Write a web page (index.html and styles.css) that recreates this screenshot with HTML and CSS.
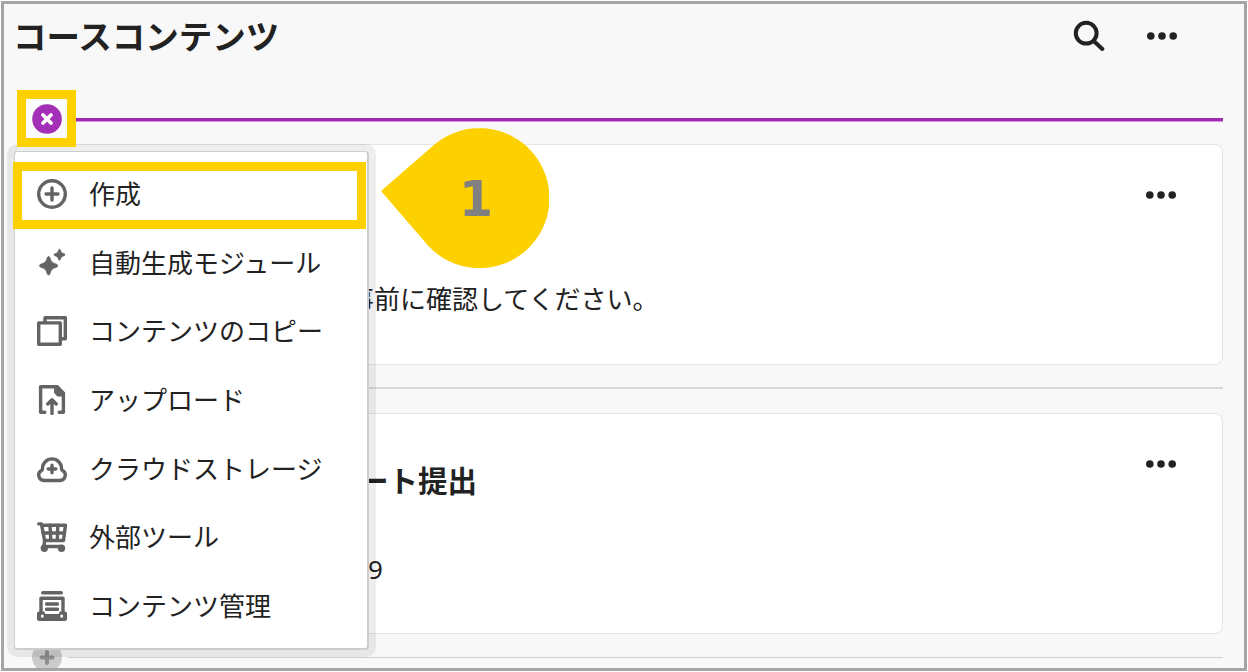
FILE: index.html
```html
<!DOCTYPE html>
<html lang="ja">
<head>
  <meta charset="UTF-8">
  <title>コースコンテンツ</title>
  <link rel="stylesheet" href="styles.css">
</head>
<body>
  <div class="frame">
    <header class="header">
      <h1>コースコンテンツ</h1>
      <svg class="search" width="32" height="32" viewBox="0 0 32 32">
        <circle cx="13.2" cy="13.2" r="10.4"/>
        <path d="M21 21.2L29.3 29"/>
      </svg>
      <svg class="dots" width="32" height="10" viewBox="0 0 32 10">
        <circle cx="4.8" cy="5" r="3.8"/><circle cx="16" cy="5" r="3.8"/><circle cx="27.2" cy="5" r="3.8"/>
      </svg>
    </header>

    <div class="line active"></div>

    <section class="card">
      <svg class="dots" width="32" height="10" viewBox="0 0 32 10">
        <circle cx="4.8" cy="5" r="3.8"/><circle cx="16" cy="5" r="3.8"/><circle cx="27.2" cy="5" r="3.8"/>
      </svg>
      <p class="desc">事前に確認してください。</p>
    </section>

    <div class="line"></div>

    <section class="card second">
      <svg class="dots" width="32" height="10" viewBox="0 0 32 10">
        <circle cx="4.8" cy="5" r="3.8"/><circle cx="16" cy="5" r="3.8"/><circle cx="27.2" cy="5" r="3.8"/>
      </svg>
      <h2>ート提出</h2>
      <p class="due">9</p>
    </section>

    <div class="add-row">
      <svg width="30" height="30" viewBox="0 0 30 30">
        <circle cx="15" cy="15" r="15" fill="#cbcbcb"/>
        <path d="M15 10v11M9.5 15.5h11" stroke="#8c8c8c" stroke-width="4" stroke-linecap="round"/>
      </svg>
      <div class="line"></div>
    </div>
  </div>

  <ul class="menu">
    <li>
      <svg class="icon" viewBox="0 0 30 30">
        <circle cx="15" cy="15" r="13.3"/>
        <path d="M15 9v12M9 15h12"/>
      </svg>
      作成
    </li>
    <li>
      <svg class="icon solid" viewBox="0 0 30 30">
        <path d="M11.600 8.500c.8 0 1.300.8 1.600 1.700 1 3.400 2.200 4.500 5.500 5.600 1.200.4 2 .9 2 1.900s-.8 1.500-2 1.900c-3.300 1.100-4.500 2.200-5.500 5.600-.3 1.100-.8 1.900-1.600 1.900s-1.300-.8-1.600-1.900c-1-3.400-2.200-4.500-5.500-5.600-1.200-.4-2-.9-2-1.900s.8-1.500 2-1.900c3.300-1.100 4.500-2.200 5.500-5.600.3-.9.8-1.700 1.600-1.700z"/>
        <path d="M22.500 1.300c.6 0 .9.5 1.100 1.100.6 1.900 1.200 2.500 3.100 3.100.7.200 1.300.6 1.300 1.200s-.6 1-1.300 1.200c-1.900.6-2.500 1.200-3.100 3.100-.2.700-.5 1.200-1.100 1.200s-.9-.5-1.100-1.200c-.6-1.900-1.200-2.500-3.100-3.100-.7-.2-1.300-.6-1.300-1.200s.6-1 1.300-1.200c1.900-.6 2.500-1.200 3.100-3.100.2-.6.5-1.100 1.100-1.100z"/>
      </svg>
      自動生成モジュール
    </li>
    <li>
      <svg class="icon" viewBox="0 0 30 30">
        <path d="M1.700 6.900h21.600v21.400H1.700z"/>
        <path d="M8 6.500V1.700h20.300v21H24"/>
      </svg>
      コンテンツのコピー
    </li>
    <li>
      <svg class="icon" viewBox="0 0 30 30">
        <path d="M7.800 27.300H3.600V1.700h16l6.800 7v18.600h-4.200"/>
        <path class="fill" d="M18.800 1.700h1.400l6.200 6.500v1.500h-5.200l-2.400-2.500z"/>
        <path d="M15 28.500V15.500M10.800 19l4.200-4.200 4.200 4.200"/>
      </svg>
      アップロード
    </li>
    <li>
      <svg class="icon" viewBox="0 0 30 30">
        <path d="M7 26.500h16a5.400 5.400 0 0 0 2.500-10.100c-.8-.4-1-1-1-2a9.500 9.500 0 0 0-19 0c0 1-.2 1.600-1 2A5.400 5.400 0 0 0 7 26.500z"/>
        <path d="M15 11.200v7.600M11.200 15h7.600"/>
      </svg>
      クラウドストレージ
    </li>
    <li>
      <svg class="icon" viewBox="0 0 30 30">
        <path d="M1.700 1.900h2.700l3.200 16.600h18.900L28.400 3.300H4.700"/>
        <path d="M6 11h21.500M13 3.300l.8 15M20.800 3.300l-.5 15"/>
        <path d="M7.600 18.500L7 24.500h18"/>
        <circle class="fill" cx="7.300" cy="26.300" r="2"/><circle class="fill" cx="24.500" cy="26.300" r="2"/>
      </svg>
      外部ツール
    </li>
    <li>
      <svg class="icon" viewBox="0 0 30 30">
        <path d="M5.700 1.800h18.600"/>
        <path d="M4 20.500V7.300h22v13.200"/>
        <path d="M9.500 13h11M9.500 18.200h11"/>
        <path class="block" fill-rule="evenodd" d="M2 20.500h5l1.500 2.500h13l1.500-2.500h5a2 2 0 0 1 2 2V28a2 2 0 0 1-2 2H2a2 2 0 0 1-2-2v-5.500a2 2 0 0 1 2-2zM4 23.800v2.600h2.600v-2.600zM23.400 23.800v2.600H26v-2.600z"/>
      </svg>
      コンテンツ管理
    </li>
  </ul>

  <div class="mark mark-close">
    <svg width="30" height="30" viewBox="0 0 30 30">
      <circle cx="15" cy="15" r="14.800" fill="#a22fb6"/>
      <path d="M11 11l8 8M19 11l-8 8" stroke="#fff" stroke-width="3.800" stroke-linecap="round"/>
    </svg>
  </div>
  <div class="mark mark-create"></div>

  <div class="balloon">
    <svg width="168" height="140" viewBox="0 0 168 140">
      <path d="M0 63L53.500 16.500A70 70 0 1 1 46.500 117z" fill="#fdd000"/>
    </svg>
    <span>1</span>
  </div>
</body>
</html>
```

FILE: styles.css
```css
* { box-sizing: border-box; }

body {
  margin: 0;
  padding: 1px;
  width: 1248px;
  height: 672px;
  overflow: hidden;
  position: relative;
  background: #fff;
  color: #222;
  font-family: "Noto Sans", "Noto Sans CJK JP", sans-serif;
}

h1, h2, p, ul {
  margin: 0;
  padding: 0;
}

svg {
  display: block;
  flex: none;
}

.frame {
  width: 1246px;
  height: 670px;
  padding: 0 21px 0 11px;
  overflow: hidden;
  background: #f8f8f8;
  border: 3px solid #a5a5a5;
}

.header {
  display: flex;
  align-items: center;
  height: 114px;
  padding: 0 45px 50px 0;
}

.header h1 {
  flex: 1;
  margin-left: -2px;
  font-size: 33.5px;
  line-height: 48px;
}

.search {
  margin-right: 41px;
  fill: none;
  stroke: #222;
  stroke-width: 4;
  stroke-linecap: round;
}

.dots {
  fill: #222;
}

.line {
  height: 2px;
  background: #d8d8d8;
}

.line.active {
  height: 4px;
  margin-left: 8px;
  background: #9f29b3;
  border-bottom: 1px solid #d391de;
}

.card {
  height: 221px;
  margin: 22px 0;
  background: #fff;
  border: 1px solid #e4e4e4;
  border-radius: 8px;
  overflow: hidden;
}

.card.second {
  margin-top: 24px;
}

.card .dots {
  margin: 45px 45px 0 auto;
}

.desc {
  margin: 79px 0 0 332px;
  font-size: 26px;
  line-height: 40px;
}

.card h2 {
  margin: -10px 0 0 343px;
  font-size: 29.5px;
  line-height: 44px;
}

.due {
  margin: 48px 0 0 352px;
  font-size: 26px;
  line-height: 36px;
}

.add-row {
  display: flex;
  align-items: center;
  gap: 6px;
  margin-top: -14px;
  padding-left: 17px;
}

.add-row .line {
  flex: 1;
  height: 1px;
  background: #cfcfcf;
}

.menu {
  position: absolute;
  left: 14px;
  top: 151px;
  width: 355px;
  height: 499px;
  padding: 8px 0 0 22px;
  list-style: none;
  background: #fff;
  border: solid #cdcdcd;
  border-width: 1px 2px 2px 1px;
  border-radius: 4px;
  box-shadow: 0 0 0 7px rgba(0, 0, 0, 0.065);
}

.menu li {
  display: flex;
  align-items: center;
  gap: 22px;
  height: 68.6px;
  font-size: 26px;
  line-height: 40px;
}

.icon {
  width: 30px;
  height: 30px;
  fill: none;
  stroke: #636363;
  stroke-width: 3.4;
  stroke-linecap: round;
  stroke-linejoin: round;
}

.icon.solid {
  fill: #636363;
  stroke-width: 0.6;
}

.icon .block {
  fill: #636363;
  stroke: none;
}

.icon .fill {
  fill: #636363;
}

/* yellow guide marks */
.mark {
  position: absolute;
  border: 9px solid #fdd000;
}

.mark-close {
  left: 17px;
  top: 90px;
  width: 59px;
  height: 57px;
  padding: 5px 0 0 6px;
  background: #fcfbfc;
}

.mark-create {
  left: 13px;
  top: 162px;
  width: 353px;
  height: 67px;
}

.balloon {
  position: absolute;
  left: 381px;
  top: 128px;
}

.balloon span {
  position: absolute;
  left: 78px;
  top: 42px;
  font-family: "DejaVu Sans", sans-serif;
  font-size: 49px;
  font-weight: bold;
  line-height: 60px;
  color: #808080;
}
```
